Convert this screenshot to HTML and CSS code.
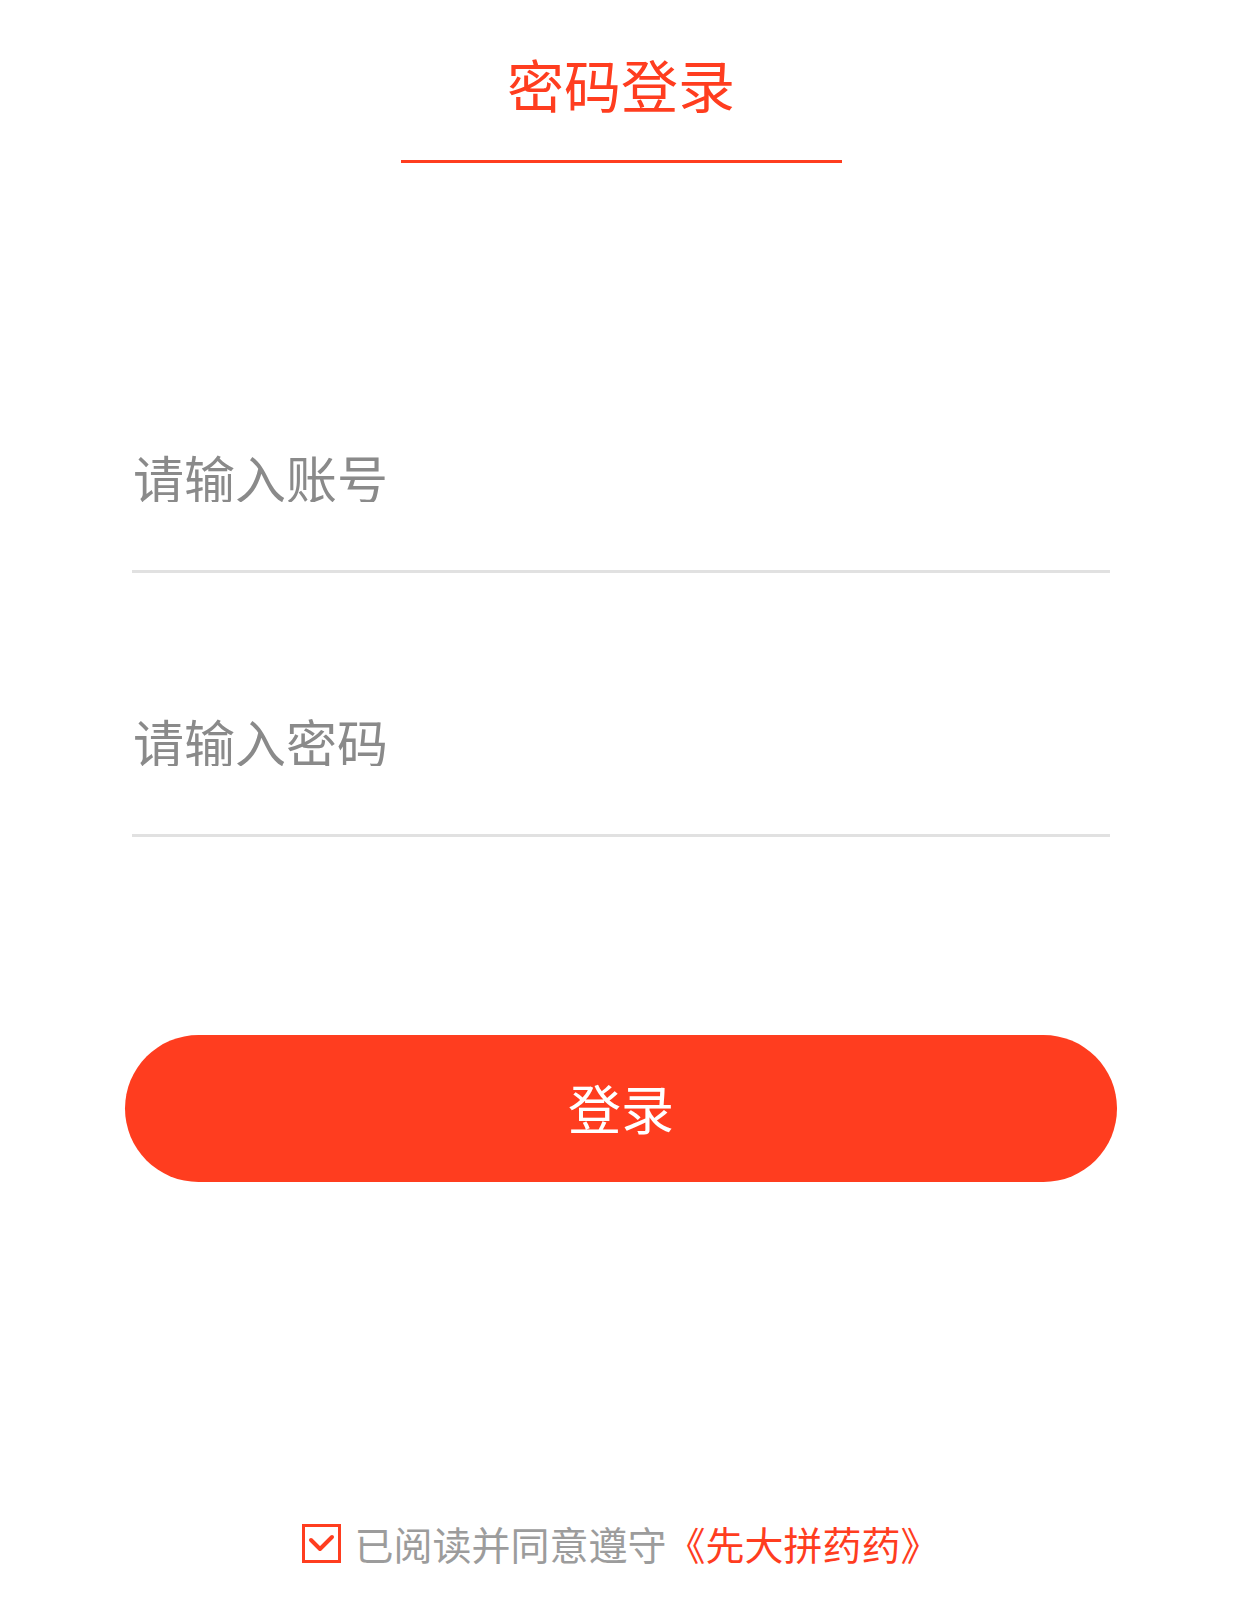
FILE: index.html
```html
<!DOCTYPE html>
<html lang="zh-CN">
<head>
<meta charset="utf-8">
<title>密码登录</title>
<link rel="stylesheet" href="styles.css">
</head>
<body>
<div class="page">
  <header class="header">
    <div class="tab">密码登录</div>
  </header>
  <form class="form">
    <div class="field field-first">
      <input class="input" type="text" placeholder="请输入账号">
    </div>
    <div class="field field-second">
      <input class="input" type="password" placeholder="请输入密码">
    </div>
  </form>
  <div class="actions">
    <button class="btn" type="button">登录</button>
  </div>
  <div class="agree">
    <svg class="check" width="39" height="39" viewBox="0 0 39 39">
      <rect x="1.5" y="1.5" width="36" height="36" fill="none" stroke="#ff3d1f" stroke-width="3"/>
      <polyline points="9,16 18,25 30,13" fill="none" stroke="#ff3d1f" stroke-width="4" stroke-linecap="round" stroke-linejoin="round"/>
    </svg>
    <span class="agree-text">已阅读并同意遵守<span class="link">《先大拼药药》</span></span>
  </div>
</div>
</body>
</html>
```

FILE: styles.css
```css
html, body {
  margin: 0;
  padding: 0;
  background: #ffffff;
}

body {
  font-family: "Noto Sans CJK SC", "Noto Sans", sans-serif;
}

.page {
  width: 1242px;
  min-height: 1622px;
  display: flex;
  flex-direction: column;
}

.header {
  display: flex;
  justify-content: center;
  padding-top: 55px;
}

.tab {
  width: 441px;
  text-align: center;
  font-size: 57px;
  line-height: 56px;
  color: #ff3d1f;
  padding-bottom: 49px;
  border-bottom: 3px solid #ff3d1f;
}

.form {
  margin: 0;
  padding: 0 132px;
  display: flex;
  flex-direction: column;
}

.field {
  padding: 62px 0 68px;
  border-bottom: 3px solid #e1e1e1;
}

.field-first {
  margin-top: 227px;
}

.field-second {
  margin-top: 81px;
}

.input {
  display: block;
  width: 100%;
  height: 50px;
  margin: 0;
  padding: 0 0 0 1px;
  border: none;
  outline: none;
  background: transparent;
  font-family: "Noto Sans CJK SC", "Noto Sans", sans-serif;
  font-size: 51px;
  line-height: 50px;
  color: #333333;
}

.input::placeholder {
  color: #8a8a8a;
}

.actions {
  padding: 0 125px;
  margin-top: 198px;
}

.btn {
  display: block;
  width: 100%;
  height: 147px;
  border: none;
  border-radius: 74px;
  background: #ff3d1f;
  color: #ffffff;
  font-family: "Noto Sans CJK SC", "Noto Sans", sans-serif;
  font-size: 53px;
  line-height: 52px;
  padding: 0 0 4px;
}

.agree {
  margin-top: 341px;
  display: flex;
  justify-content: center;
  align-items: center;
  gap: 13px;
}

.check {
  display: block;
  flex: none;
}

.agree-text {
  font-size: 39px;
  line-height: 40px;
  color: #9c9c9c;
  white-space: nowrap;
}

.link {
  color: #ff3d1f;
}
```
